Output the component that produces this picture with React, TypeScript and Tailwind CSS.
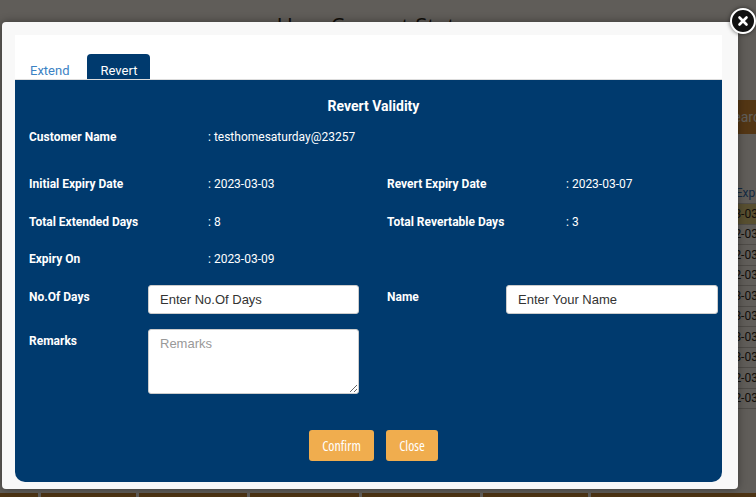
import React from 'react';

const font = { fontFamily: 'Roboto, "Liberation Sans", Arial, sans-serif' };
const inputFont = { fontFamily: '"Liberation Sans", Arial, sans-serif' };
const btnFont = { fontFamily: '"Open Sans", "DejaVu Sans Condensed", sans-serif', fontStretch: '75%' };

const tableRows = ['3-03', '2-03', '2-03', '2-03', '3-03', '3-03', '3-03', '3-03', '2-03', '2-03'];

const InfoRow = ({ label, value }: { label: string; value: string }) => (
  <>
    <div className="font-bold">{label}</div>
    <div>: {value}</div>
  </>
);

const App: React.FC = () => {
  return (
    <div className="relative w-[756px] h-[497px] overflow-hidden bg-white" style={font}>
      {/* page behind the modal */}
      <div className="flex flex-col">
        <h1 className="text-center text-[22px] leading-[28px] text-[#222] pt-[11px] h-[40px]" style={{ fontFamily: '"Open Sans", sans-serif' }}>
          User Current Status
        </h1>
        <div className="mt-[60px] ml-[20px] mr-[-14px] h-[34px] bg-[#d9913a] flex justify-end items-center pr-[2px] text-white text-[14px]">
          Search
        </div>
        <div className="mt-[50px] ml-[4px] mr-[-14px] text-[12px] text-[#222]">
          <div className="h-[20px] border-b border-[#ccc] flex justify-end pr-[2px] text-[#2a6ebb]">Expiry</div>
          {tableRows.map((r, i) => (
            <div key={i} className={`h-[20.5px] border-b border-[#ccc] flex justify-end items-center pr-[2px] ${i === 0 ? 'bg-[#e8d88a]' : ''}`}>
              202{r}-0
            </div>
          ))}
        </div>
        <div className="absolute left-0 right-0 top-[493px] flex gap-[3px] h-[10px]">
          <div className="w-[38px] bg-[#c98a3a]" />
          <div className="w-[95px] bg-[#c98a3a]" />
          <div className="w-[108px] bg-[#c98a3a]" />
          <div className="w-[109px] bg-[#c98a3a]" />
          <div className="w-[118px] bg-[#c98a3a]" />
          <div className="w-[105px] bg-[#c98a3a]" />
          <div className="flex-1 bg-[#c98a3a]" />
        </div>
      </div>

      {/* overlay */}
      <div className="absolute inset-0 bg-[rgba(10,6,0,0.65)]" />

      {/* modal */}
      <div className="absolute left-[2px] top-[22px] w-[736px] h-[467px] bg-[#f8f8f8] rounded-[4px] shadow-[0_0_8px_rgba(0,0,0,0.4)] pt-[13px] pl-[13px]">
        <div className="w-[707px] bg-white pt-[20px] rounded-b-[10px]">
          <div className="flex items-end h-[25px] border-b border-[#ddd] text-[13px]">
            <div className="pl-[15px] pr-[17px] h-[25px] leading-[33px] text-[#3b82c4]">Extend</div>
            <div className="px-[14px] h-[25px] leading-[33px] bg-[#003a6e] text-white rounded-t-[4px] w-[63px]">Revert</div>
          </div>

          <div className="bg-[#003a6e] text-white h-[402px] rounded-b-[10px] pt-[17px] pl-[14px] text-[12px]">
            <div className="text-center font-bold text-[14px] leading-[18px] pr-[4px]">Revert Validity</div>

            <div className="grid grid-cols-[179px_179px_179px_1fr] leading-[16px] mt-[14px]">
              <InfoRow label="Customer Name" value="testhomesaturday@23257" />
              <div />
              <div />
            </div>

            <div className="grid grid-cols-[179px_179px_179px_1fr] leading-[16px] mt-[31px]">
              <InfoRow label="Initial Expiry Date" value="2023-03-03" />
              <InfoRow label="Revert Expiry Date" value="2023-03-07" />
            </div>

            <div className="grid grid-cols-[179px_179px_179px_1fr] leading-[16px] mt-[22px]">
              <InfoRow label="Total Extended Days" value="8" />
              <InfoRow label="Total Revertable Days" value="3" />
            </div>

            <div className="grid grid-cols-[179px_179px_179px_1fr] leading-[16px] mt-[21px]">
              <InfoRow label="Expiry On" value="2023-03-09" />
            </div>

            <div className="flex mt-[18px]">
              <div className="w-[119px] font-bold leading-[16px] pt-[4px]">No.Of Days</div>
              <input
                defaultValue="Enter No.Of Days"
                className="w-[211px] h-[29px] bg-white border border-[#ccc] rounded-[3px] px-[11px] text-[13px] text-[#333] outline-none"
                style={inputFont}
              />
              <div className="w-[28px]" />
              <div className="w-[119px] font-bold leading-[16px] pt-[4px]">Name</div>
              <input
                defaultValue="Enter Your Name"
                className="w-[212px] h-[29px] bg-white border border-[#ccc] rounded-[3px] px-[11px] text-[13px] text-[#333] outline-none"
                style={inputFont}
              />
            </div>

            <div className="flex mt-[15px]">
              <div className="w-[119px] font-bold leading-[16px] pt-[4px]">Remarks</div>
              <textarea
                placeholder="Remarks"
                className="w-[211px] h-[65px] bg-white border border-[#ccc] rounded-[3px] px-[11px] pt-[4px] text-[13px] text-[#333] placeholder:text-[#999] outline-none"
                style={inputFont}
              />
            </div>

            <div className="flex justify-center gap-[12px] mt-[36px] pr-[4px]">
              <button className="w-[65px] h-[31px] bg-[#f0ad4e] rounded-[3px] text-white text-[14px]" style={btnFont}>
                Confirm
              </button>
              <button className="w-[52px] h-[31px] bg-[#f0ad4e] rounded-[3px] text-white text-[14px]" style={btnFont}>
                Close
              </button>
            </div>
          </div>
        </div>
      </div>

      {/* close icon */}
      <button className="absolute left-[730px] top-[8px] w-[26px] h-[26px] rounded-full bg-[#111] border-2 border-white flex items-center justify-center shadow-[0_0_4px_rgba(0,0,0,0.6)]">
        <svg width="12" height="12" viewBox="0 0 12 12">
          <path d="M2.5 2.5 L9.5 9.5 M9.5 2.5 L2.5 9.5" stroke="white" strokeWidth="2.6" strokeLinecap="round" />
        </svg>
      </button>
    </div>
  );
};

export default App;
